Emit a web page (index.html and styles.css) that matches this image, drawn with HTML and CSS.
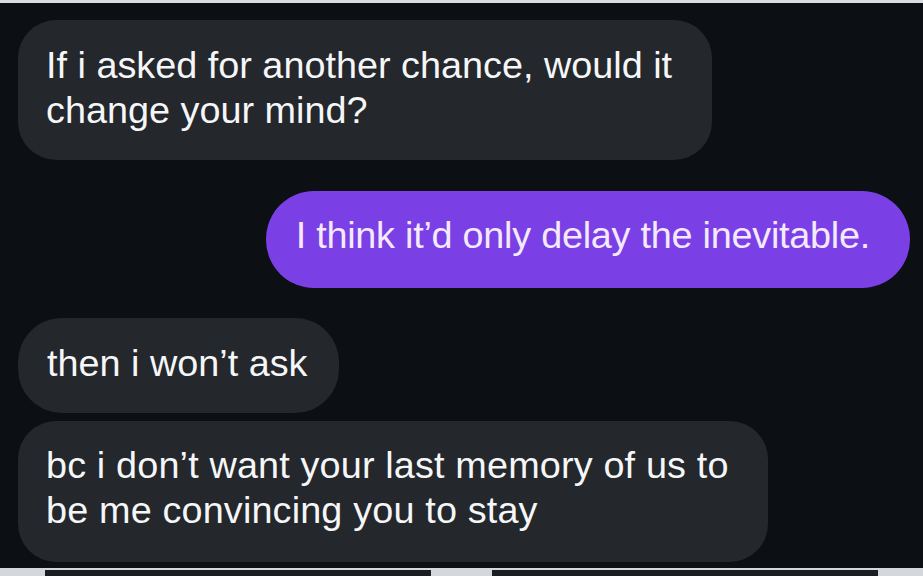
FILE: index.html
```html
<!DOCTYPE html>
<html lang="en">
<head>
<meta charset="utf-8">
<title>Messages</title>
<link rel="stylesheet" href="styles.css">
</head>
<body>
<div class="screen">
  <div class="top-strip"></div>
  <main class="thread">
    <div class="bubble in b1">If i asked for another chance, would it change your mind?</div>
    <div class="bubble out b2">I think it’d only delay the inevitable.</div>
    <div class="bubble in b3">then i won’t ask</div>
    <div class="bubble in b4">bc i don’t want your last memory of us to be me convincing you to stay</div>
  </main>
  <div class="bottom-strip">
    <div class="tab"></div>
    <div class="tab"></div>
  </div>
</div>
</body>
</html>
```
FILE: styles.css
```css
html, body {
  margin: 0;
  padding: 0;
  background: #0c0f13;
}
.screen {
  width: 923px;
  height: 576px;
  display: flex;
  flex-direction: column;
  overflow: hidden;
  background: #0c0f13;
  font-family: "Liberation Sans", Arial, sans-serif;
}
.top-strip {
  height: 3px;
  background: #dcdde0;
  flex: none;
}
.thread {
  flex: 1;
  display: flex;
  flex-direction: column;
  align-items: flex-start;
  padding: 17px 13px 0 18px;
}
.bubble {
  font-size: 37.8px;
  line-height: 45px;
  box-sizing: border-box;
}
.in {
  background: #24272b;
  color: #f5f6f7;
}
.out {
  background: #7b3fe6;
  color: #f3eaff;
  align-self: flex-end;
}
.b1 {
  width: 694px;
  padding: 23px 28px 27px;
  border-radius: 38px;
}
.b2 {
  margin-top: 31px;
  padding: 22px 40px 30px 30px;
  border-radius: 48px;
  letter-spacing: -0.25px;
}
.b3 {
  margin-top: 30px;
  padding: 23px 31px 27px 29px;
  border-radius: 44px;
}
.b4 {
  margin-top: 8px;
  width: 750px;
  padding: 22px 28px 29px;
  border-radius: 38px;
  letter-spacing: 0.15px;
}
.bottom-strip {
  height: 8px;
  flex: none;
  background: #d6d7da;
  display: flex;
  gap: 61px;
  padding: 2px 0 0 45px;
  box-sizing: border-box;
}
.tab {
  width: 386px;
  background: #1b1d21;
}
```
